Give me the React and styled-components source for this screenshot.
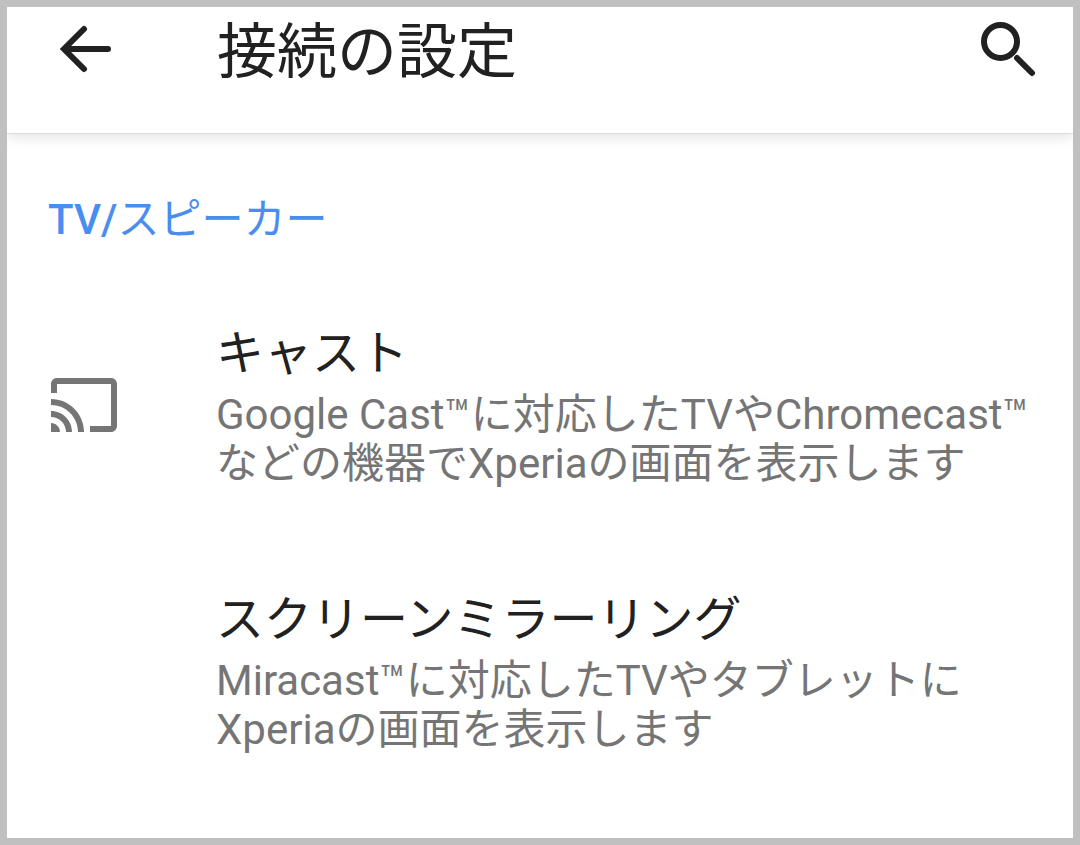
import React from 'react';
import styled, { createGlobalStyle } from 'styled-components';

const GlobalStyle = createGlobalStyle`
  * {
    box-sizing: border-box;
  }
  body {
    margin: 0;
    background: #ffffff;
    font-family: Roboto, 'Noto Sans CJK JP', sans-serif;
  }
`;

const Screen = styled.div`
  min-height: 100vh;
  border: 7px solid #c0c0c0;
  background: #ffffff;
  overflow: hidden;
`;

const Header = styled.header`
  display: flex;
  align-items: flex-start;
  padding: 10px 32px 44px 48px;
  border-bottom: 1px solid #dcdcdc;
  box-shadow: 0 4px 12px rgba(0, 0, 0, 0.1);
`;

const Title = styled.h1`
  flex: 1;
  margin: 0 0 0 98px;
  font-size: 60px;
  line-height: 72px;
  font-weight: 400;
  color: #212121;
`;

const IconButton = styled.button`
  display: flex;
  padding: 0;
  border: none;
  background: none;
  color: #212121;
  cursor: pointer;
`;

const SectionTitle = styled.h2`
  margin: 58px 0 0;
  padding: 0 41px;
  font-size: 42px;
  line-height: 56px;
  font-weight: 500;
  color: #4a8df0;
`;

const Kana = styled.span`
  font-weight: 400;
`;

const List = styled.ul`
  display: grid;
  gap: 100px;
  margin: 0;
  padding: 74px 0 60px;
  list-style: none;
`;

const Item = styled.li`
  display: grid;
  grid-template-columns: 168px 1fr;
  align-items: center;
  padding: 0 0 0 41px;
  color: #757575;
`;

const ItemIcon = styled.div`
  display: flex;
`;

const ItemTitle = styled.h3`
  margin: 0 0 4px;
  font-size: 48px;
  line-height: 64px;
  font-weight: 400;
  color: #212121;
`;

const Summary = styled.p`
  margin: 0;
  font-size: 42px;
  line-height: 49px;
`;

const items = [
  {
    title: 'キャスト',
    lines: ['Google Cast™に対応したTVやChromecast™', 'などの機器でXperiaの画面を表示します'],
    cast: true,
  },
  {
    title: 'スクリーンミラーリング',
    lines: ['Miracast™に対応したTVやタブレットに', 'Xperiaの画面を表示します'],
  },
];

function BackIcon() {
  return (
    <svg width='64' height='64' viewBox='0 0 64 64' fill='none' stroke='currentColor' strokeWidth='6' strokeLinecap='round'>
      <path d='M29 12L9 32L29 52M11 32H53' />
    </svg>
  );
}

function SearchIcon() {
  return (
    <svg width='64' height='64' viewBox='0 0 64 64' fill='none' stroke='currentColor' strokeWidth='6' strokeLinecap='round'>
      <circle cx='23.5' cy='24.5' r='16.5' />
      <path d='M40 41L55 56' />
    </svg>
  );
}

function CastIcon() {
  return (
    <svg width='72' height='72' viewBox='0 0 24 24' fill='currentColor'>
      <path d='M21 3H3c-1.1 0-2 .9-2 2v3h2V5h18v14h-7v2h7c1.1 0 2-.9 2-2V5c0-1.1-.9-2-2-2zM1 18v3h3c0-1.66-1.34-3-3-3zm0-4v2c2.76 0 5 2.24 5 5h2c0-3.87-3.13-7-7-7zm0-4v2c4.97 0 9 4.03 9 9h2c0-6.08-4.93-11-11-11z' />
    </svg>
  );
}

function App() {
  return (
    <>
      <GlobalStyle />
      <Screen lang='ja'>
        <Header>
          <IconButton aria-label='戻る'>
            <BackIcon />
          </IconButton>
          <Title>接続の設定</Title>
          <IconButton aria-label='検索'>
            <SearchIcon />
          </IconButton>
        </Header>
        <main>
          <SectionTitle>
            TV/<Kana>スピーカー</Kana>
          </SectionTitle>
          <List>
            {items.map((item) => (
              <Item key={item.title}>
                <ItemIcon>{item.cast && <CastIcon />}</ItemIcon>
                <div>
                  <ItemTitle>{item.title}</ItemTitle>
                  <Summary>
                    {item.lines[0]}
                    <br />
                    {item.lines[1]}
                  </Summary>
                </div>
              </Item>
            ))}
          </List>
        </main>
      </Screen>
    </>
  );
}

export default App;
